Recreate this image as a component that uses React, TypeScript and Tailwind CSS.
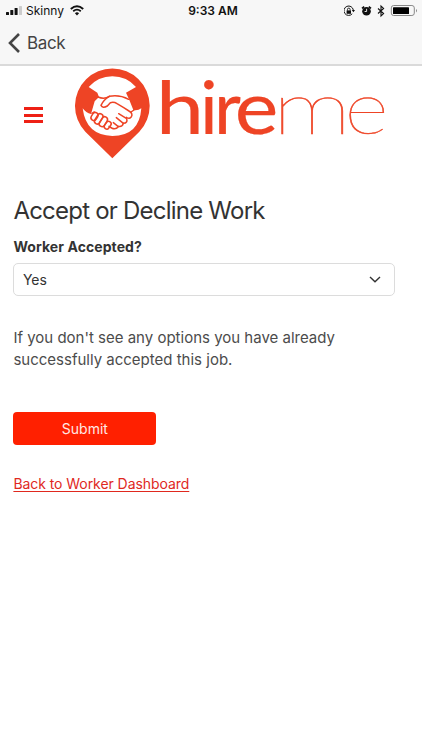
import type { ReactNode } from 'react';

function SignalBars() {
  return (
    <svg className="h-[9px] w-[17px]" viewBox="0 0 17 9">
      <rect x="0" y="6" width="3" height="3" rx="0.6" fill="#111" />
      <rect x="4.3" y="4" width="3" height="5" rx="0.6" fill="#111" />
      <rect x="8.6" y="2" width="3" height="7" rx="0.6" fill="#111" />
      <rect x="13" y="0" width="3" height="9" rx="0.6" fill="#ccc" />
    </svg>
  );
}

function WifiIcon() {
  return (
    <svg className="h-[11px] w-[14px]" viewBox="0 0 14 11" fill="none" stroke="#111">
      <path d="M0.8 4 Q7 -1.6 13.2 4" strokeWidth="2" />
      <path d="M3.2 6.3 Q7 3 10.8 6.3" strokeWidth="1.8" />
      <path d="M4.9 8.2 Q7 6.4 9.1 8.2 L7 10.5 Z" fill="#111" stroke="none" />
    </svg>
  );
}

function StatusIcons() {
  return (
    <svg className="h-[14px] w-[78px]" viewBox="0 0 78 14" fill="none" stroke="#111">
      {/* rotation lock */}
      <path d="M8.2 9.8 A4.7 4.7 0 1 1 9.3 6" strokeWidth="1" />
      <path d="M7.8 6 h3.2 l-1.6 2.2 Z" fill="#111" stroke="none" />
      <rect x="2.6" y="6.4" width="4.4" height="3.4" fill="#111" stroke="none" />
      <path d="M3.5 6.5 V5.4 a1.3 1.3 0 0 1 2.6 0 V6.5" strokeWidth="0.9" />
      {/* alarm */}
      <circle cx="22.5" cy="7.3" r="4.3" fill="#111" stroke="none" />
      <path d="M18 4.4 L20.2 2.6 M27 4.4 L24.8 2.6" strokeWidth="1.7" />
      <path d="M22.6 4.8 V7.5 H20.6" stroke="#f7f7f7" strokeWidth="0.9" />
      {/* bluetooth */}
      <path d="M34 4.5 L39.6 9.6 L37 12 V2 L39.6 4.4 L34 9.5" strokeWidth="1.1" />
      {/* battery */}
      <rect x="47.3" y="1.5" width="23" height="10" rx="2.4" stroke="#888" strokeWidth="1" />
      <rect x="49" y="3.2" width="16" height="6.8" rx="0.6" fill="#000" stroke="none" />
      <path d="M72 5 Q74 6.6 72 8.4 Z" fill="#888" stroke="none" />
    </svg>
  );
}

function HandshakePin() {
  return (
    <svg className="h-[100px] w-[90px] shrink-0" viewBox="0 0 270 300" fill="none">
      <path d="M127 283 L46 203 A112 112 0 1 1 208 203 Z" fill="#ee4425" />
      <path
        d="M56 69 Q85 37 127 37 Q170 37 198 69 L168 86 L178 108 L190 138 Q203 141 214 133 Q208 216 127 216 Q48 214 38 133 Q48 147 63 150 L74 112 L87 99 L82 86 Z"
        fill="#fff"
      />
      <g stroke="#ee4425" strokeWidth="4.5" strokeLinecap="round" strokeLinejoin="round">
        <path d="M84 99 Q103 107 118 97 Q148 91 176 106" />
        <path d="M118 97 Q100 108 93 124 Q98 134 112 126 L121 116 Q132 113 141 119 Q160 130 177 141 Q191 149 183 160 Q178 166 169 160" />
        <path d="M66 148 L73 144 M183 144 L192 138" />
        <path d="M146 149 L170 164 Q174 177 160 178 L139 161" />
        <path d="M160 178 Q157 190 144 187 L130 176" />
        <path d="M145 188 Q137 198 125 192 L117 187" />
        <rect x="66" y="145" width="17" height="25" rx="8.5" transform="rotate(32 74 156)" />
        <rect x="78" y="148" width="17" height="33" rx="8.5" transform="rotate(32 86 164)" />
        <rect x="92" y="157" width="17" height="32" rx="8.5" transform="rotate(32 100 172)" />
        <rect x="106" y="171" width="15" height="25" rx="7.5" transform="rotate(35 113 183)" />
      </g>
    </svg>
  );
}

function Wordmark() {
  return (
    <svg
      className="h-[100px] w-[240px] shrink-0 overflow-visible"
      viewBox="0 0 240 100"
      fill="#ee4425"
      stroke="#ee4425"
      fontFamily="Lato, sans-serif"
      fontSize="74"
    >
      <text y="70" fontWeight="400" strokeWidth="0.2">
        <tspan x="-4" textLength="48" lengthAdjust="spacingAndGlyphs">h</tspan>
        <tspan x="40">i</tspan>
        <tspan x="54">r</tspan>
        <tspan x="74.7" textLength="43.6" lengthAdjust="spacingAndGlyphs">e</tspan>
      </text>
      <text y="70" fontWeight="100" strokeWidth="0.5">
        <tspan x="112.5" textLength="79" lengthAdjust="spacingAndGlyphs">m</tspan>
        <tspan x="184.5" textLength="44" lengthAdjust="spacingAndGlyphs">e</tspan>
      </text>
    </svg>
  );
}

function MenuButton() {
  return (
    <button type="button" aria-label="Menu" className="mt-[43px] ml-6 flex w-[19px] flex-col gap-[3.5px]">
      <span className="h-[3px] w-full bg-[#ee2015]" />
      <span className="h-[3px] w-full bg-[#ee2015]" />
      <span className="h-[3px] w-full bg-[#ee2015]" />
    </button>
  );
}

function NavBar({ children }: { children: ReactNode }) {
  return (
    <nav className="flex h-[44px] items-center pl-2 text-[17px] tracking-[-0.35px] text-[#444]">
      <svg className="h-5 w-3" viewBox="0 0 12 20" fill="none" stroke="#444" strokeWidth="2.6">
        <path d="M11 1 L2 10 L11 19" />
      </svg>
      <span className="ml-[7px] pt-0.5">{children}</span>
    </nav>
  );
}

export default function App() {
  return (
    <div className="h-[750px] w-full overflow-hidden bg-white font-['Inter',sans-serif] text-[#333]">
      <div className="h-[66px] border-b-2 border-[#dadada] bg-[#f7f7f7]">
        <div className="grid h-[21px] grid-cols-3 items-center text-xs text-[#111]">
          <div className="flex items-center pl-1.5">
            <SignalBars />
            <span className="mr-[6px] ml-[3px]">Skinny</span>
            <WifiIcon />
          </div>
          <span className="pl-1 text-center font-semibold">9:33 AM</span>
          <div className="flex justify-end">
            <StatusIcons />
          </div>
        </div>
        <NavBar>Back</NavBar>
      </div>

      <header className="-mt-0.5 flex h-[100px] items-start">
        <MenuButton />
        <div className="ml-[27px] flex">
          <HandshakePin />
          <Wordmark />
        </div>
      </header>

      <main className="px-[13.4px] pt-8">
        <h1 className="text-2xl leading-[30px] tracking-[-0.78px]">Accept or Decline Work</h1>
        <label className="mt-[11px] block text-sm leading-5 font-bold tracking-[0.08px]">Worker Accepted?</label>
        <div className="mt-[6px] flex h-[33px] w-[382px] items-center justify-between rounded-[5px] border border-[#dcdcdc] pr-[13px] pl-[8.5px] text-sm">
          <span>Yes</span>
          <svg className="h-[7px] w-3" viewBox="0 0 12 7" fill="none" stroke="#333" strokeWidth="1.4">
            <path d="M1 1 L6 5.8 L11 1" />
          </svg>
        </div>
        <p className="mt-[31px] text-[15px] leading-[21.5px] text-[#4c4c4c]">
          If you don't see any options you have already
          <br />
          successfully accepted this job.
        </p>
        <button type="button" className="mt-[42px] flex h-[33px] w-[143px] items-center justify-center rounded-[4px] bg-[#ff2000] text-sm text-[#ffe9e5]">
          Submit
        </button>
        <a href="#" className="mt-[29px] block w-fit text-sm leading-5 tracking-[-0.06px] text-[#e0281e] underline underline-offset-2">
          Back to Worker Dashboard
        </a>
      </main>
    </div>
  );
}
